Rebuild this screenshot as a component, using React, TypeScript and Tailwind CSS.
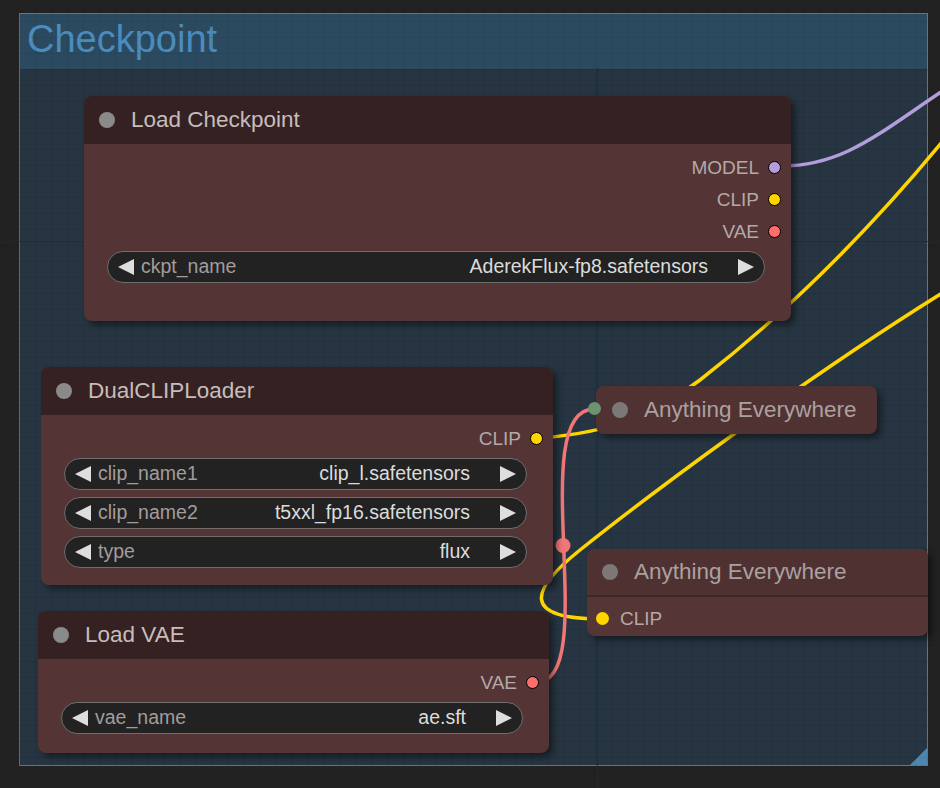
import React from 'react';

type Output = { label: string; dot: string };
type Combo = { name: string; value: string };

interface NodeProps {
  title: string;
  className: string;
  outputs?: Output[];
  combos?: Combo[];
}

function SlotDot({ dot }: { dot: string }) {
  return <span className={`block w-[13px] h-[13px] rounded-full border border-black ${dot}`} />;
}

function Arrow({ dir }: { dir: 'left' | 'right' }) {
  return (
    <svg width="16" height="16" viewBox="0 0 16 16" className="shrink-0">
      <polygon points={dir === 'left' ? '16,0 16,16 0,8' : '0,0 0,16 16,8'} fill="#dedede" />
    </svg>
  );
}

function ComboWidget({ name, value }: Combo) {
  return (
    <div className="h-8 ml-[23px] mr-[26px] flex items-center rounded-full border border-[#6e6e6e] bg-[#222222] pl-[10px] pr-[10px] text-[19.5px]">
      <Arrow dir="left" />
      <span className="ml-[7px] text-[#a39c9c]">{name}</span>
      <span className="ml-auto text-[#dcdcdc]">{value}</span>
      <span className="ml-[30px]">
        <Arrow dir="right" />
      </span>
    </div>
  );
}

function TitleBar({ title, bg, text }: { title: string; bg: string; text: string }) {
  return (
    <div className={`h-12 flex items-center pl-[15px] gap-4 rounded-t-lg text-[22.5px] ${bg} ${text}`}>
      <span className="w-4 h-4 rounded-full bg-[#8a8a8a]" />
      <span>{title}</span>
    </div>
  );
}

function GraphNode({ title, className, outputs = [], combos = [] }: NodeProps) {
  return (
    <div
      className={`absolute flex flex-col rounded-lg bg-[#553435] shadow-[4px_4px_6px_rgba(0,0,0,0.45)] ${className}`}
    >
      <TitleBar title={title} bg="bg-[#352121]" text="text-[#c6bdbc]" />
      <div className="pt-[7px]">
        {outputs.map((o) => (
          <div key={o.label} className="h-8 flex items-center justify-end gap-[9px] pr-[10px]">
            <span className="text-[#b3a9a8]">{o.label}</span>
            <SlotDot dot={o.dot} />
          </div>
        ))}
        <div className="mt-1 flex flex-col gap-[7px]">
          {combos.map((c) => (
            <ComboWidget key={c.name} {...c} />
          ))}
        </div>
      </div>
    </div>
  );
}

function Wires() {
  return (
    <svg className="absolute inset-0" width="940" height="788" viewBox="0 0 940 788">
      <defs>
        <pattern id="grid" width="16" height="16" patternUnits="userSpaceOnUse" x="3" y="5">
          <path d="M 16 0 L 0 0 0 16" fill="none" stroke="rgba(0,0,0,0.14)" strokeWidth="1" />
        </pattern>
      </defs>
      <rect width="940" height="788" fill="url(#grid)" />
      <line x1="597.5" y1="68" x2="597.5" y2="788" stroke="#1c2946" strokeOpacity="0.8" strokeWidth="1.2" />
      <line x1="0" y1="241.5" x2="940" y2="241.5" stroke="#1c2946" strokeOpacity="0.8" strokeWidth="1.2" />

      {/* MODEL */}
      <path d="M 781 166 C 845 166, 880 132, 950 86" fill="none" stroke="#b39ddb" strokeWidth="3.5" strokeLinecap="round" />
      {/* CLIP out of DualCLIPLoader */}
      <path
        d="M 540 438 C 620 432, 660 410, 700 380 C 790 310, 880 220, 960 120"
        fill="none"
        stroke="#ffd500"
        strokeWidth="3.5"
        strokeLinecap="round"
      />
      {/* CLIP into lower Anything Everywhere */}
      <path
        d="M 602 619 C 520 619, 530 590, 580 550 S 800 380, 960 282"
        fill="none"
        stroke="#ffd500"
        strokeWidth="3.5"
        strokeLinecap="round"
      />
      {/* VAE */}
      <path d="M 537 682 C 602 682, 524 409, 594 409" fill="none" stroke="#f27676" strokeWidth="3.5" strokeLinecap="round" />
      <circle cx="563" cy="545.5" r="7.5" fill="#f27676" />
    </svg>
  );
}

export default function App() {
  return (
    <div className="relative w-[940px] h-[788px] overflow-hidden bg-[#222222] font-['Liberation_Sans',Arial,sans-serif] text-[19px] leading-none">
      {/* group */}
      <div className="absolute left-[19px] top-[13px] w-[909px] h-[753px] flex flex-col border-[1.5px] border-[#4d7c9b] bg-[#263541]">
        <div className="h-[55px] shrink-0 bg-[#2c4a5f] pl-[7px] pb-[6px] flex items-center">
          <span className="text-[38px] text-[#4a8cbe] leading-none">Checkpoint</span>
        </div>
        <div className="flex-1 flex items-end justify-end">
          <svg width="17" height="17" viewBox="0 0 17 17">
            <polygon points="17,0 17,17 0,17" fill="#4f86b0" />
          </svg>
        </div>
      </div>

      <Wires />

      <GraphNode
        title="Load Checkpoint"
        className="left-[84px] top-[96px] w-[707px] h-[225px]"
        outputs={[
          { label: 'MODEL', dot: 'bg-[#b39ddb]' },
          { label: 'CLIP', dot: 'bg-[#ffd500]' },
          { label: 'VAE', dot: 'bg-[#ff6e6e]' },
        ]}
        combos={[{ name: 'ckpt_name', value: 'AderekFlux-fp8.safetensors' }]}
      />

      <GraphNode
        title="DualCLIPLoader"
        className="left-[41px] top-[367px] w-[512px] h-[218px]"
        outputs={[{ label: 'CLIP', dot: 'bg-[#ffd500]' }]}
        combos={[
          { name: 'clip_name1', value: 'clip_l.safetensors' },
          { name: 'clip_name2', value: 't5xxl_fp16.safetensors' },
          { name: 'type', value: 'flux' },
        ]}
      />

      <GraphNode
        title="Load VAE"
        className="left-[38px] top-[611px] w-[511px] h-[142px]"
        outputs={[{ label: 'VAE', dot: 'bg-[#ff6e6e]' }]}
        combos={[{ name: 'vae_name', value: 'ae.sft' }]}
      />

      {/* collapsed Anything Everywhere */}
      <div className="absolute left-[596px] top-[386px] w-[281px] h-12 rounded-lg bg-[#513233] shadow-[4px_4px_6px_rgba(0,0,0,0.45)] flex items-center pl-4 gap-4 text-[22.5px] text-[#aaa1a0]">
        <span className="absolute -left-[8px] top-[16px] w-[13px] h-[13px] rounded-full bg-[#6d9270]" />
        <span className="w-4 h-4 rounded-full bg-[#7d7878]" />
        <span>Anything Everywhere</span>
      </div>

      {/* Anything Everywhere with CLIP input */}
      <div className="absolute left-[587px] top-[549px] w-[341px] h-[87px] rounded-lg bg-[#553536] shadow-[4px_4px_6px_rgba(0,0,0,0.45)] flex flex-col">
        <div className="h-12 shrink-0 flex items-center pl-[15px] gap-4 rounded-t-lg bg-[#503132] border-b-2 border-[#3f2627] text-[22.5px] text-[#aaa1a0]">
          <span className="w-4 h-4 rounded-full bg-[#7d7878]" />
          <span>Anything Everywhere</span>
        </div>
        <div className="flex-1 flex items-center pl-[9px] gap-[11px] pt-[3px]">
          <span className="block w-[13px] h-[13px] rounded-full bg-[#ffd500]" />
          <span className="text-[#b3a9a8]">CLIP</span>
        </div>
      </div>
    </div>
  );
}
